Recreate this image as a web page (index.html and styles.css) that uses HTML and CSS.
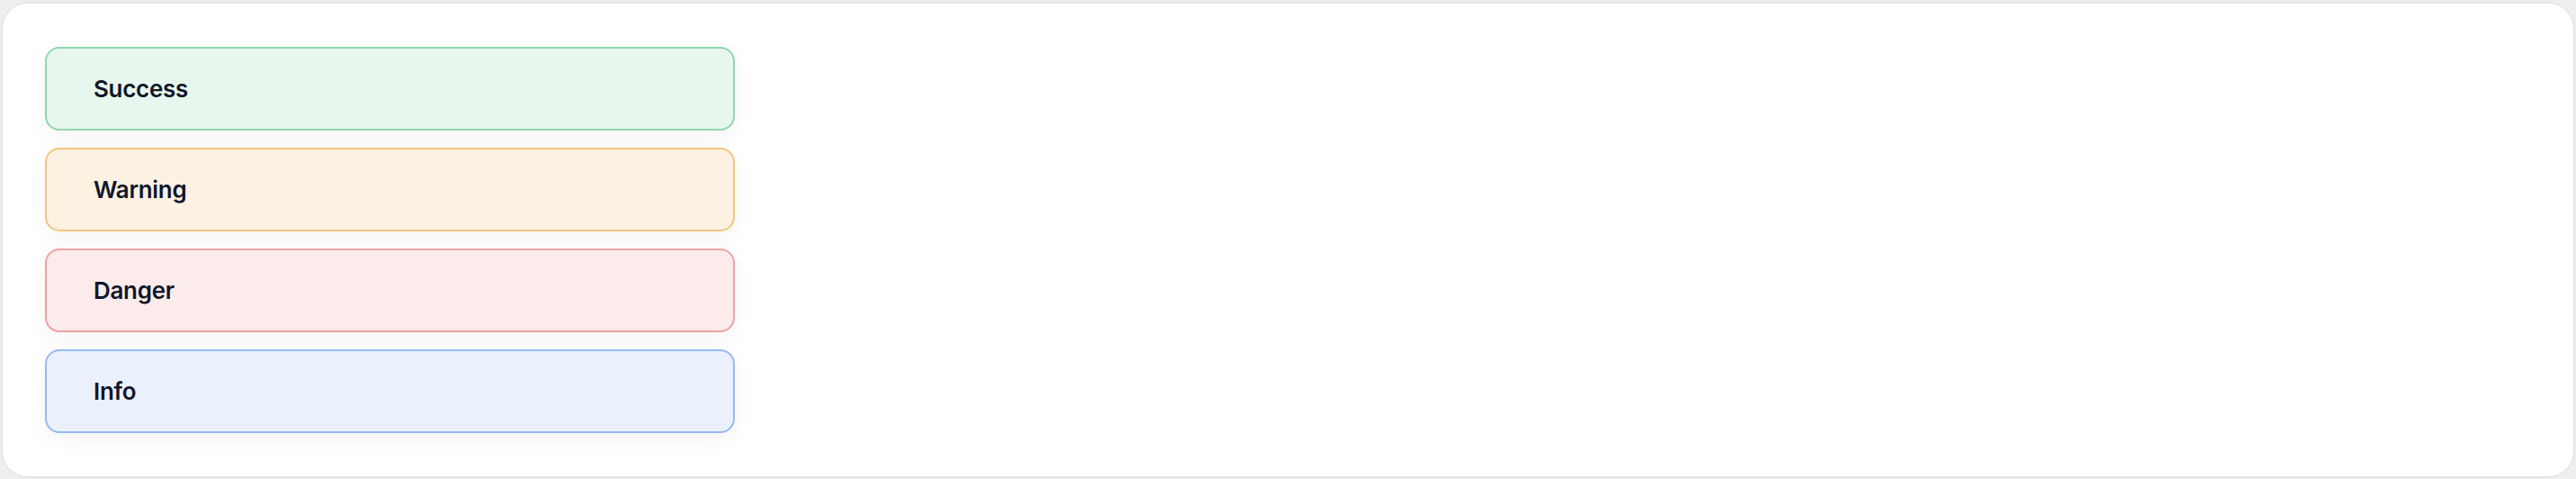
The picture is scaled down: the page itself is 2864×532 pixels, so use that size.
FILE: index.html
```html
<!DOCTYPE html>
<html lang="en">
<head>
    <meta charset="UTF-8">
    <meta name="viewport" content="width=device-width, initial-scale=1.0">
    <title>Alerts</title>
    <link rel="stylesheet" href="styles.css">
</head>
<body>

    <div class="card">
        <div class="alerts">
            <div class="alert alert-success">Success</div>
            <div class="alert alert-warning">Warning</div>
            <div class="alert alert-danger">Danger</div>
            <div class="alert alert-info">Info</div>
        </div>
    </div>

</body>
</html>
```

FILE: styles.css
```css
html, body {
    margin: 0;
    padding: 0;
}
body {
    font-family: Inter, "Noto Sans", sans-serif;
    background-color: #efeff2;
    width: 2864px;
    height: 532px;
    overflow: hidden;
}
.card {
    box-sizing: border-box;
    margin: 2px 0 0 1px;
    width: 2862px;
    height: 529px;
    background: white;
    border: 2px solid #e5e5ea;
    border-radius: 30px;
    padding: 48px 47px;
}
.alerts {
    display: flex;
    flex-direction: column;
    gap: 19px;
    width: 767px;
}
.alert {
    box-sizing: border-box;
    display: flex;
    align-items: center;
    height: 93px;
    padding: 0 52px;
    border: 2px solid;
    border-radius: 16px;
    font-size: 26px;
    font-weight: 600;
    letter-spacing: -0.3px;
    color: #0f172a;
    box-shadow: 0 6px 24px rgba(0, 0, 0, 0.05);
}
.alert-success {
    background-color: #e8f7ee;
    border-color: #8dd8aa;
}
.alert-warning {
    background-color: #fdf1e2;
    border-color: #f2c57e;
}
.alert-danger {
    background-color: #fcebeb;
    border-color: #eea1a3;
}
.alert-info {
    background-color: #eaf1fd;
    border-color: #97b8f3;
}
```
